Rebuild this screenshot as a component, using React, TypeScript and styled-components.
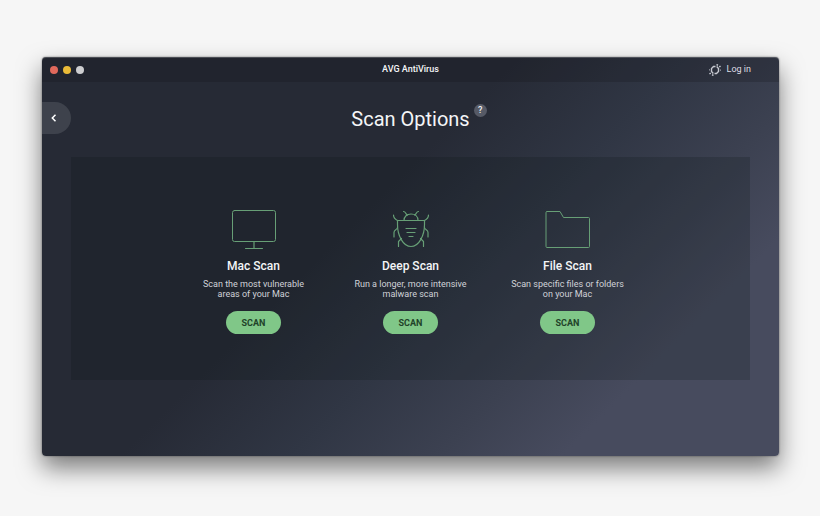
import type { ReactNode } from 'react'
import styled, { createGlobalStyle } from 'styled-components'

const GlobalStyle = createGlobalStyle`
  * {
    box-sizing: border-box;
  }
  body {
    margin: 0;
    background: #f6f6f6;
    color: #f4f5f7;
    font-family: Roboto, 'Liberation Sans', sans-serif;
  }
  button {
    border: 0;
    padding: 0;
    color: inherit;
    font-family: inherit;
    cursor: pointer;
  }
`

const Page = styled.div`
  padding: 57px 41px 60px 42px;
`

const AppWindow = styled.div`
  overflow: hidden;
  border-radius: 4px;
  background: linear-gradient(
    135deg,
    #262a35 0%,
    #262a35 42%,
    #303644 57%,
    #3c4151 70%,
    #474b5e 81%
  );
  box-shadow: 0 12px 24px rgba(0, 0, 0, 0.5), 0 0 2px rgba(0, 0, 0, 0.5),
    inset 0 1px 0 rgba(255, 255, 255, 0.25);
`

const TitleBar = styled.header`
  display: grid;
  grid-template-columns: 1fr auto 1fr;
  align-items: center;
  height: 25px;
  background: rgba(18, 16, 24, 0.22);
  font-size: 9px;
  line-height: 11px;
  font-weight: 500;
`

const Lights = styled.div`
  display: flex;
  gap: 5px;
  padding-left: 8px;
`

const Light = styled.button<{ $color: string }>`
  width: 8px;
  height: 8px;
  border-radius: 50%;
  background: ${({ $color }) => $color};
`

const LoginButton = styled.button`
  display: flex;
  align-items: center;
  justify-self: end;
  gap: 6px;
  margin-right: 28px;
  background: none;
  color: #dddee3;
  font-size: 9px;
  line-height: 11px;
`

const PageHeader = styled.div`
  display: grid;
  grid-template-columns: 1fr auto 1fr;
  margin-top: 20px;
`

const BackButton = styled.button`
  display: flex;
  align-items: center;
  width: 29px;
  height: 32px;
  padding-left: 8px;
  border-radius: 0 16px 16px 0;
  background: #3e424c;
`

const Heading = styled.h1`
  margin: 0;
  padding-top: 2px;
  font-size: 20px;
  line-height: 30px;
  font-weight: 400;
`

const HelpButton = styled.button`
  width: 13px;
  height: 13px;
  margin: 2px 0 0 4px;
  border-radius: 50%;
  background: #565a66;
  font-size: 9px;
  line-height: 13px;
  font-weight: 500;
`

const Panel = styled.main`
  display: flex;
  justify-content: center;
  margin: 23px 29px 76px;
  padding: 52px 0 46px;
  background: rgba(12, 18, 22, 0.2);
`

const Option = styled.section`
  display: flex;
  flex-direction: column;
  align-items: center;
  width: 157px;
  text-align: center;
`

const OptionTitle = styled.h2`
  margin: 9px 0 5px;
  font-size: 12px;
  line-height: 16px;
  font-weight: 500;
`

const OptionText = styled.p`
  width: 120px;
  margin: 0 0 12px;
  color: #d0d2d8;
  font-size: 9px;
  line-height: 10px;
`

const ScanButton = styled.button`
  width: 55px;
  height: 23px;
  border-radius: 12px;
  background: #80c788;
  color: #1f4329;
  font-size: 9px;
  font-weight: 700;
`

const LineIcon = styled.svg`
  display: block;
  fill: none;
  stroke: #679f76;
  stroke-width: 1;
  stroke-linecap: round;
  stroke-linejoin: round;
`

const MonitorIcon = () => (
  <LineIcon width="48" height="40" viewBox="0 0 48 40">
    <rect x="2.5" y="1.5" width="43" height="31" rx="2" />
    <path d="M23.5 32.5v7M24.5 32.5v7" strokeWidth="0.6" />
    <path d="M15.5 39.5h17" />
  </LineIcon>
)

const BugIcon = () => (
  <LineIcon width="48" height="40" viewBox="0 0 48 40">
    <g strokeWidth="1.2">
      <path d="M10.500 11.500h27v4c0 11-5.500 22-13.500 22s-13.500-11-13.500-22z" />
      <path d="M17 11.500c0-4 3-6.500 7-6.500s7 2.500 7 6.500" />
      <path d="M16.500 2.500c2.500 0 1.500 2.500 4 3.500M31.500 2.500c-2.500 0-1.500 2.500-4 3.500" />
      <path d="M6.500 6c0 3 1 4 4 5.500M41.500 6c0 3-1 4-4 5.500" />
      <path d="M10.500 18.500c-.5 2.500-3.500 2-3.500 5v4.500M37.500 18.500c.5 2.500 3.500 2 3.500 5v4.500" />
      <path d="M14.500 29.500l-3 3v5M33.500 29.500l3 3v5" />
      <path d="M19 19.500h10M20 23.500h8M22 27.500h4" />
    </g>
  </LineIcon>
)

const FolderIcon = () => (
  <LineIcon width="48" height="40" viewBox="0 0 48 40">
    <path d="M3 2.500h13l3.500 6h25a1 1 0 0 1 1 1v28a1 1 0 0 1-1 1h-41.500a1 1 0 0 1-1-1v-34a1 1 0 0 1 1-1" />
  </LineIcon>
)

const AccountIcon = () => (
  <svg width="12" height="12" viewBox="0 0 12 12" fill="none" stroke="#c6c8d0">
    <path d="M4.300 9.500L2.500 7.500V4.500L4.500 2.500H6.500M7.700 2.500L9.500 4.500V7.500L7.500 9.500H5.500" strokeWidth="1.400" />
    <path d="M7.500.6l1.500.6M10.500 1.800l.8 1.400M4.500 11.400l-1.500-.6M1.500 10.200l-.8-1.400" strokeWidth="1.500" />
    <path d="M.4 6.500v-1.300M11.600 5.500v1.300" strokeWidth="0.800" />
  </svg>
)

interface ScanOption {
  title: string
  lines: [string, string]
  icon: ReactNode
}

const options: ScanOption[] = [
  {
    title: 'Mac Scan',
    lines: ['Scan the most vulnerable', 'areas of your Mac'],
    icon: <MonitorIcon />
  },
  {
    title: 'Deep Scan',
    lines: ['Run a longer, more intensive', 'malware scan'],
    icon: <BugIcon />
  },
  {
    title: 'File Scan',
    lines: ['Scan specific files or folders', 'on your Mac'],
    icon: <FolderIcon />
  }
]

export default function App() {
  return (
    <Page>
      <GlobalStyle />
      <AppWindow>
        <TitleBar>
          <Lights>
            <Light $color="#e0695c" aria-label="Close" />
            <Light $color="#eabb38" aria-label="Minimize" />
            <Light $color="#cdcdd0" aria-label="Zoom" />
          </Lights>
          <span>AVG AntiVirus</span>
          <LoginButton>
            <AccountIcon />
            Log in
          </LoginButton>
        </TitleBar>

        <PageHeader>
          <BackButton aria-label="Back">
            <svg width="8" height="10" viewBox="0 0 8 10" fill="none" stroke="#fff" strokeWidth="1.500">
              <path d="M5.500 1.800L2.300 5l3.200 3.200" />
            </svg>
          </BackButton>
          <Heading>Scan Options</Heading>
          <HelpButton aria-label="Help">?</HelpButton>
        </PageHeader>

        <Panel>
          {options.map(({ title, lines, icon }) => (
            <Option key={title}>
              {icon}
              <OptionTitle>{title}</OptionTitle>
              <OptionText>
                {lines[0]}
                <br />
                {lines[1]}
              </OptionText>
              <ScanButton aria-label={`Start ${title}`}>SCAN</ScanButton>
            </Option>
          ))}
        </Panel>
      </AppWindow>
    </Page>
  )
}
